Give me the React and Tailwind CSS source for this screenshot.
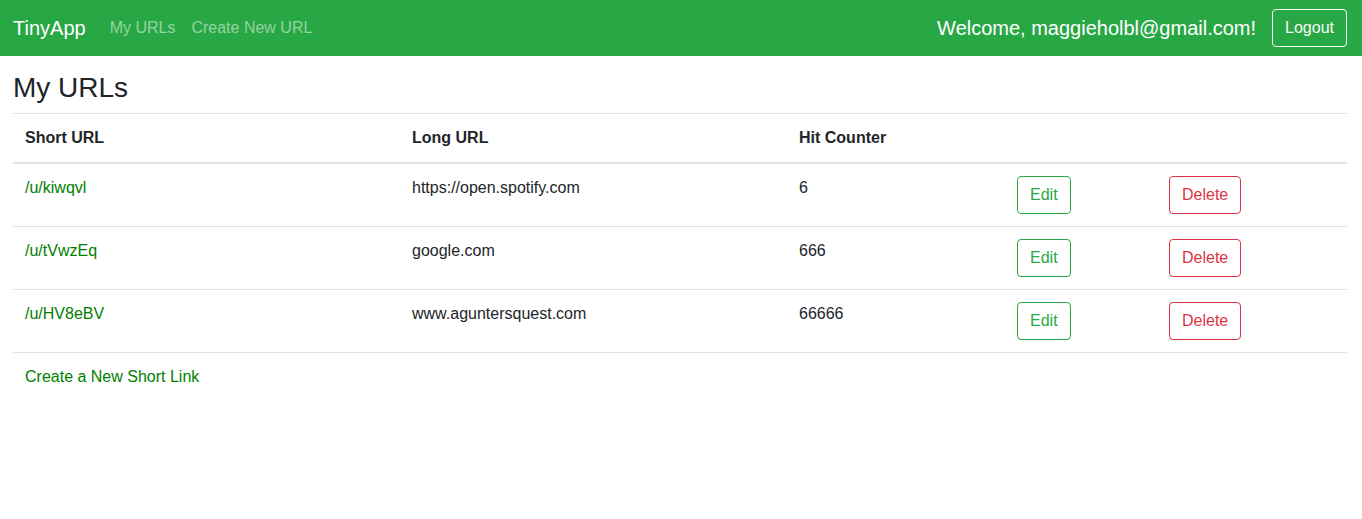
import React from 'react';

const urls = [
  { id: 'kiwqvl', long: 'https://open.spotify.com', hits: 6 },
  { id: 'tVwzEq', long: 'google.com', hits: 666 },
  { id: 'HV8eBV', long: 'www.aguntersquest.com', hits: 66666 },
];

export default function App() {
  return (
    <div className="min-h-[519px] bg-white text-[#212529] text-base leading-6" style={{ fontFamily: '"Liberation Sans", Arial, sans-serif' }}>
      {/* Navbar */}
      <nav className="h-14 bg-[#28a745] flex items-center pl-[13px] pr-[15px]">
        <a className="text-white text-xl leading-[30px] mr-4">TinyApp</a>
        <div className="flex items-center">
          <a className="px-2 text-white/50">My URLs</a>
          <a className="px-2 text-white/50">Create New URL</a>
        </div>
        <div className="ml-auto flex items-center">
          <span className="text-white text-xl">Welcome, maggieholbl@gmail.com!</span>
          <button className="ml-4 h-[38px] px-3 border border-[#f8f9fa] rounded text-[#f8f9fa] leading-6">Logout</button>
        </div>
      </nav>

      <main className="px-[13px] pr-[15px] pt-[15px]">
        <h3 className="text-[28px] leading-[34px] font-normal mb-2">My URLs</h3>
        <table className="w-full border-collapse text-left">
          <colgroup>
            <col className="w-[387px]" />
            <col className="w-[387px]" />
            <col className="w-[218px]" />
            <col className="w-[152px]" />
            <col />
          </colgroup>
          <thead>
            <tr className="border-t border-[#dee2e6] border-b-2">
              <th className="p-3 font-bold">Short URL</th>
              <th className="p-3 font-bold">Long URL</th>
              <th className="p-3 font-bold">Hit Counter</th>
              <th className="p-3"></th>
              <th className="p-3"></th>
            </tr>
          </thead>
          <tbody>
            {urls.map((u) => (
              <tr key={u.id} className="border-b border-[#dee2e6] align-top">
                <td className="p-3"><a className="text-[#008000]">/u/{u.id}</a></td>
                <td className="p-3">{u.long}</td>
                <td className="p-3">{u.hits}</td>
                <td className="p-3">
                  <button className="h-[38px] px-3 border border-[#28a745] rounded text-[#28a745]">Edit</button>
                </td>
                <td className="p-3">
                  <button className="h-[38px] px-3 border border-[#dc3545] rounded text-[#dc3545]">Delete</button>
                </td>
              </tr>
            ))}
          </tbody>
        </table>
        <div className="p-3">
          <a className="text-[#008000]">Create a New Short Link</a>
        </div>
      </main>
    </div>
  );
}
